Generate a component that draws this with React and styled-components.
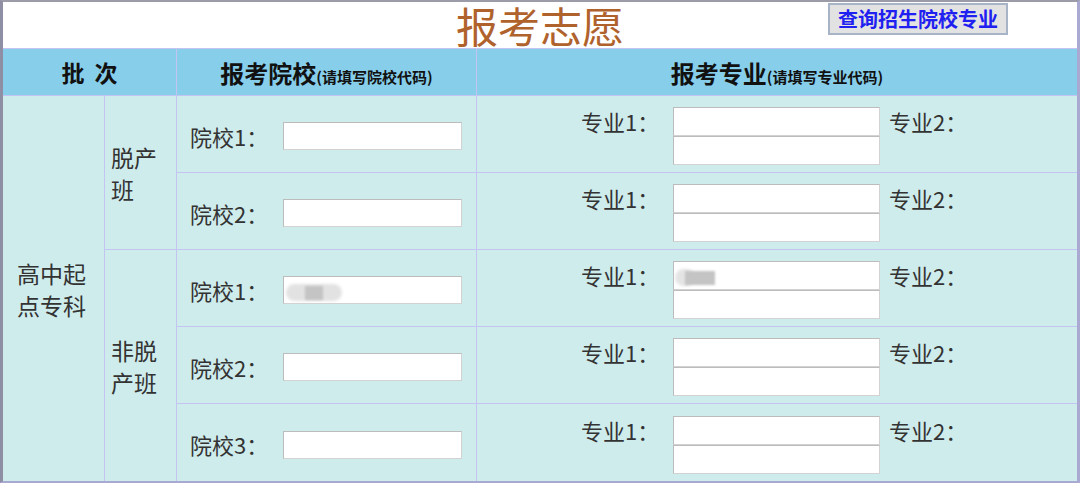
import React from "react";
import styled, { createGlobalStyle } from "styled-components";

const Global = createGlobalStyle`
  body {
    margin: 0;
    font-family: "Noto Sans CJK SC", "Noto Sans", sans-serif;
    background: #fff;
  }
`;

const Frame = styled.div`
  width: 1080px;
  height: 483px;
  box-sizing: border-box;
  border-style: solid;
  border-width: 2px 3px 2px 3px;
  border-color: #9c9ca8 #a9a9d2 #a9a9d2 #8e8ea4;
  display: grid;
  grid-template-columns: 101px 71px 299px 600px;
  grid-template-rows: 46px 46px 76px 76px 76px 76px 77px;
  gap: 1px;
  background: #c4c4f2;
`;

const TitleBar = styled.div`
  grid-column: 1 / -1;
  background: #fff;
  display: grid;
  grid-template-columns: 1fr auto 1fr;
  align-items: start;
`;

const Title = styled.h1`
  grid-column: 2;
  margin: 0;
  padding-top: 1px;
  height: 45px;
  font-size: 42px;
  font-weight: normal;
  line-height: 44px;
  color: #b0622c;
`;

const QueryButton = styled.button`
  justify-self: end;
  margin: 1px 69px 0 0;
  height: 32px;
  padding: 0 8px;
  border: 2px solid #a7b3c6;
  background: #e2e2e2;
  color: #2020f0;
  font-family: inherit;
  font-size: 20px;
  font-weight: bold;
  line-height: 28px;
`;

const HeadCell = styled.div`
  grid-column: span ${(p) => p.$span || 1};
  background: #87ceeb;
  display: flex;
  align-items: center;
  justify-content: center;
  color: #111;
  font-weight: bold;
  font-size: ${(p) => (p.$span ? 23 : 24)}px;
  word-spacing: 5px;
`;

const Small = styled.span`
  font-size: 15px;
`;

const SideCell = styled.div`
  grid-row: span ${(p) => p.$rows};
  background: #cfecec;
  display: flex;
  align-items: center;
  padding: 0 ${(p) => p.$pad}px;
  color: #333;
  font-size: 23px;
  line-height: 32px;
`;

const SchoolCell = styled.div`
  background: #cfecec;
  display: flex;
  align-items: center;
  padding: 3px 0 0 13px;
`;

const MajorCell = styled.div`
  background: #cfecec;
  display: flex;
  align-items: center;
  padding: 4px 0 0 104px;
`;

const Label = styled.span`
  flex: none;
  width: ${(p) => p.$w || "auto"};
  margin-left: ${(p) => p.$ml || 0}px;
  color: #333;
  font-size: 22px;
  line-height: 28px;
  white-space: nowrap;
`;

const Group = styled.div`
  display: flex;
  align-items: flex-start;
`;

const Stack = styled.div`
  display: flex;
  flex-direction: column;
`;

const Field = styled.div`
  position: relative;
  width: ${(p) => p.$w}px;
  height: ${(p) => p.$h}px;
`;

const Box = styled.input`
  width: 100%;
  height: 100%;
  box-sizing: border-box;
  margin: 0;
  padding: 0 4px;
  border: 1px solid;
  border-color: #bcbcbc #d2d2d2 #d2d2d2 #bcbcbc;
  background: #fff;
  outline: none;
`;

const Smudge = styled.div`
  position: absolute;
  top: 8px;
  left: ${(p) => p.$x}px;
  width: ${(p) => p.$w}px;
  height: 17px;
  border-radius: 9px;
  background: ${(p) => p.$c};
  filter: blur(1.5px);
`;

const Core = styled.div`
  position: absolute;
  top: 10px;
  left: ${(p) => p.$x}px;
  width: ${(p) => p.$w}px;
  height: 14px;
  background: #c4c4c4;
  filter: blur(1px);
`;

function School({ n, blur }) {
  return (
    <SchoolCell>
      <Label $w="93px">院校{n}：</Label>
      <Field $w={179} $h={28}>
        <Box />
        {blur && (
          <>
            <Smudge $x={3} $w={56} $c="#e2e2e2" />
            <Core $x={22} $w={18} />
          </>
        )}
      </Field>
    </SchoolCell>
  );
}

function Major({ blur }) {
  return (
    <MajorCell>
      <Group>
        <Label $w="92px">专业1：</Label>
        <Stack>
          <Field $w={207} $h={29}>
            <Box />
            {blur && (
              <>
                <Smudge $x={2} $w={20} $c="#e4e4e4" />
                <Core $x={12} $w={30} />
              </>
            )}
          </Field>
          <Field $w={207} $h={29}>
            <Box />
          </Field>
        </Stack>
        <Label $ml={9}>专业2：</Label>
      </Group>
    </MajorCell>
  );
}

export default function App() {
  return (
    <>
      <Global />
      <Frame>
        <TitleBar>
          <Title>报考志愿</Title>
          <QueryButton>查询招生院校专业</QueryButton>
        </TitleBar>

        <HeadCell $span={2}>批 次</HeadCell>
        <HeadCell>
          <span>
            报考院校<Small>(请填写院校代码)</Small>
          </span>
        </HeadCell>
        <HeadCell>
          <span>
            报考专业<Small>(请填写专业代码)</Small>
          </span>
        </HeadCell>

        <SideCell $rows={5} $pad={14}>高中起点专科</SideCell>
        <SideCell $rows={2} $pad={6}>脱产班</SideCell>
        <School n={1} />
        <Major />
        <School n={2} />
        <Major />

        <SideCell $rows={3} $pad={6}>非脱产班</SideCell>
        <School n={1} blur />
        <Major blur />
        <School n={2} />
        <Major />
        <School n={3} />
        <Major />
      </Frame>
    </>
  );
}
